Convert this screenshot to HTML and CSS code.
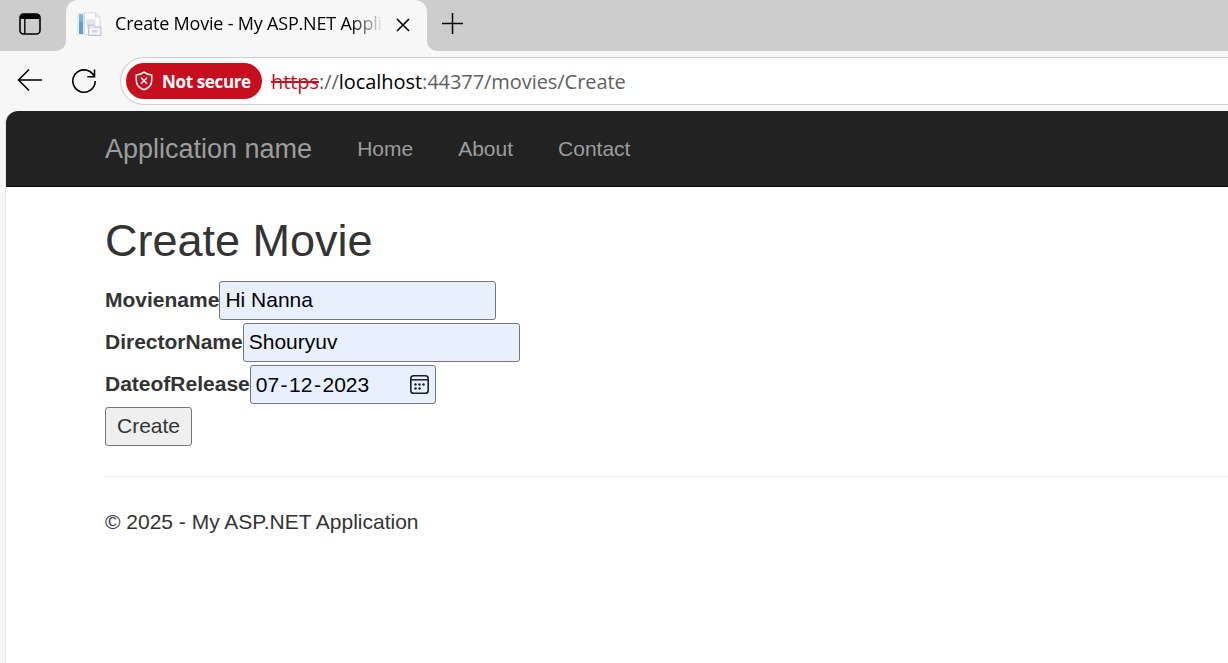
FILE: index.html
```html
<!DOCTYPE html>
<html lang="en">
<head>
<meta charset="utf-8">
<title>Create Movie - My ASP.NET Application</title>
<link rel="stylesheet" href="styles.css">
</head>
<body>
<div class="tabstrip">
  <div class="strip-left">
    <svg width="22" height="22" viewBox="0 0 22 22"><rect x="1" y="1" width="20" height="20" rx="3.5" fill="none" stroke="#000" stroke-width="1.6"/><path d="M1 6V4a3 3 0 0 1 3-3h14a3 3 0 0 1 3 3v2z" fill="#000"/><path d="M5.8 6v15" stroke="#000" stroke-width="1.4"/></svg>
  </div>
  <div class="tab-back">
    <div class="tab">
      <svg class="favicon" width="25" height="25" viewBox="0 0 25 25">
        <path d="M.5 1.500h6v21h-6z" fill="#edf1f3" stroke="#dde1e4" stroke-width=".7"/>
        <path d="M2 2.500h4v19.500H2z" fill="#58a3ce"/>
        <path d="M2 2.500h4v7H2z" fill="#79b8da"/>
        <path d="M7.500 .800h11l4.500 4v18H7.500z" fill="#fafbfb" stroke="#d2d5d9" stroke-width=".9"/>
        <path d="M18.500 .800v4H23" fill="#e9ebed" stroke="#cfd3d7" stroke-width=".8"/>
        <path d="M9.500 7.500h9v9h-9z" fill="#dfe4ea"/>
        <path d="M11.500 13h5l1 2h6.500v8.500H11.500z" fill="#e3e6ed" stroke="#bcc2ce" stroke-width="1"/>
        <path d="M13 16.500h9.500V22H13z" fill="#f6f7fa"/><path d="M15 18h5.500v2.500H15z" fill="#cdd7e4"/>
      </svg>
      <span class="tab-title">Create Movie - My ASP.NET Appli</span>
      <svg class="tab-close" width="14" height="14" viewBox="0 0 14 14"><path d="M1 1l12 12M13 1L1 13" stroke="#000" stroke-width="1.6"/></svg>
    </div>
  </div>
  <div class="strip-right">
    <svg width="22" height="22" viewBox="0 0 22 22"><path d="M0 10.500h21M10.500 0v21" stroke="#000" stroke-width="1.5"/></svg>
  </div>
</div>
<div class="toolbar">
  <svg class="back" width="26" height="24" viewBox="0 0 26 24"><path d="M25 12H1.500M12 1.500L1.500 12 12 22.500" fill="none" stroke="#000" stroke-width="1.5"/></svg>
  <svg class="reload" width="26" height="26" viewBox="0 0 26 26"><path d="M24.200 13A11.200 11.200 0 1 1 22.300 6.800L23.300 8.500M23.500 1.500v7.200h-7.200" fill="none" stroke="#000" stroke-width="1.6"/></svg>
  <div class="address">
    <div class="insecure">
      <svg width="18" height="20" viewBox="0 0 18 20"><path d="M9 1.200C6.800 3 4.300 3.800 1.300 4v5.500c0 4.500 3 7.600 7.700 9.300 4.700-1.700 7.700-4.800 7.700-9.300V4C13.700 3.800 11.200 3 9 1.200z" fill="none" stroke="#fff" stroke-width="1.500"/><path d="M6 6.700l6 6M12 6.700l-6 6" stroke="#fff" stroke-width="1.500"/></svg>
      <span>Not secure</span>
    </div>
    <div class="url"><span class="scheme">https</span><span class="sep">://</span><span class="host">localhost</span><span class="path">:44377/movies/Create</span></div>
  </div>
</div>
<div class="page">
  <nav class="navbar">
    <a class="brand">Application name</a>
    <a class="navlink">Home</a>
    <a class="navlink">About</a>
    <a class="navlink">Contact</a>
  </nav>
  <main class="content">
    <h2>Create Movie</h2>
    <form>
      <div class="field"><label>Moviename</label><div class="input">Hi Nanna</div></div>
      <div class="field"><label>DirectorName</label><div class="input">Shouryuv</div></div>
      <div class="field"><label>DateofRelease</label><div class="input date"><span class="date-text">07<span class="dash">-</span>12<span class="dash">-</span>2023</span>
        <svg width="19" height="19" viewBox="0 0 19 19"><rect x=".8" y=".8" width="17.400" height="17.400" rx="2.800" fill="none" stroke="#1b1e25" stroke-width="1.600"/><path d="M1 4.800h17" stroke="#1b1e25" stroke-width="1.500"/><g fill="#1b1e25"><circle cx="5.500" cy="9.500" r="1.200"/><circle cx="9.500" cy="9.500" r="1.200"/><circle cx="13.500" cy="9.500" r="1.200"/><circle cx="5.500" cy="13.500" r="1.200"/><circle cx="9.500" cy="13.500" r="1.200"/></g></svg></div></div>
      <button type="button" class="submit">Create</button>
    </form>
    <hr>
    <footer>© 2025 - My ASP.NET Application</footer>
  </main>
</div>
</body>
</html>
```
FILE: styles.css
```css
* { box-sizing: border-box; }
body {
  margin: 0;
  height: 663px;
  overflow: hidden;
  display: flex;
  flex-direction: column;
  background: #f7f7f7;
  font-family: "Open Sans", "Noto Sans", sans-serif;
}
svg { display: block; flex: none; }
.tabstrip { display: flex; height: 51px; flex: none; }
.strip-left {
  width: 66px;
  padding: 13px 0 0 19px;
  background: #cdcdcd;
  border-bottom-right-radius: 10px;
}
.tab-back { width: 361px; background: linear-gradient(#cdcdcd 50%, #f7f7f7 50%); }
.tab {
  display: flex;
  height: 51px;
  padding-left: 11px;
  background: #f7f7f7;
  border-radius: 12px 12px 0 0;
}
.favicon { margin-top: 12px; }
.tab-title {
  width: 269px;
  margin-left: 13px;
  white-space: nowrap;
  font-size: 18px;
  letter-spacing: -0.200px;
  line-height: 47px;
  -webkit-mask-image: linear-gradient(90deg, #000 235px, transparent 269px);
  mask-image: linear-gradient(90deg, #000 235px, transparent 269px);
}
.tab-close { margin: 18px 0 0 12px; }
.strip-right {
  flex: 1;
  padding: 13px 0 0 15px;
  background: #cdcdcd;
  border-bottom-left-radius: 10px;
}
.toolbar { display: flex; height: 60px; flex: none; padding-left: 17px; }
.back { margin-top: 17px; }
.reload { margin: 17px 0 0 28px; }
.address {
  display: flex;
  flex: 1;
  height: 48px;
  margin: 6px 0 0 23px;
  padding: 5px 0 0 5px;
  background: #fff;
  border: 1px solid #cecece;
  border-right: 0;
  border-radius: 24px 0 0 24px;
}
.insecure {
  display: flex;
  align-items: center;
  gap: 9px;
  width: 136px;
  height: 36px;
  padding-left: 9px;
  border-radius: 18px;
  background: #c50f1f;
  color: #fff;
  font-size: 17px;
  font-weight: 700;
  letter-spacing: -0.350px;
  white-space: nowrap;
}
.url {
  margin-left: 9px;
  color: #606060;
  font-size: 20px;
  letter-spacing: -0.060px;
  line-height: 38px;
  white-space: nowrap;
}
.scheme { color: #c50f1f; text-decoration: line-through; text-decoration-thickness: 2px; }
.host { color: #000; }
.page {
  flex: 1;
  margin-left: 5px;
  background: #fff;
  border-left: 1px solid #e6e6e6;
  border-top-left-radius: 12px;
  font-family: "Liberation Sans", Arial, sans-serif;
  font-size: 21px;
  color: #333;
}
.navbar {
  display: flex;
  height: 76px;
  padding-left: 99px;
  background: #222;
  border-bottom: 1px solid #080808;
  border-top-left-radius: 12px;
  color: #9d9d9d;
  line-height: 75px;
}
.brand { font-size: 27px; line-height: 77px; margin-right: 22.500px; }
.navlink { padding: 0 22.500px; }
.content { padding: 29px 0 0 99px; }
h2 { margin: 0; font-size: 45px; font-weight: 500; line-height: 50px; }
form { padding-top: 15px; display: flex; flex-direction: column; gap: 3px; align-items: flex-start; }
.field { display: flex; align-items: center; }
label { padding-bottom: 2px; font-weight: 700; }
.input {
  display: flex;
  align-items: center;
  width: 277px;
  height: 39px;
  padding: 0 6px 2px 5px;
  background: #e8f0fe;
  border: 1px solid #767676;
  border-radius: 3px;
  color: #000;
}
.date { width: 186px; justify-content: space-between; padding: 0 6px 0 5px; }
.dash { padding: 0 1.500px; }
.submit {
  width: 87px;
  height: 39px;
  padding: 0 0 2px;
  border: 1px solid #767676;
  border-radius: 3px;
  background: #efefef;
  color: #333;
  font: inherit;
}
hr { margin: 30px 0; border: 0; border-top: 1px solid #eee; }
footer { line-height: 30px; }
```
